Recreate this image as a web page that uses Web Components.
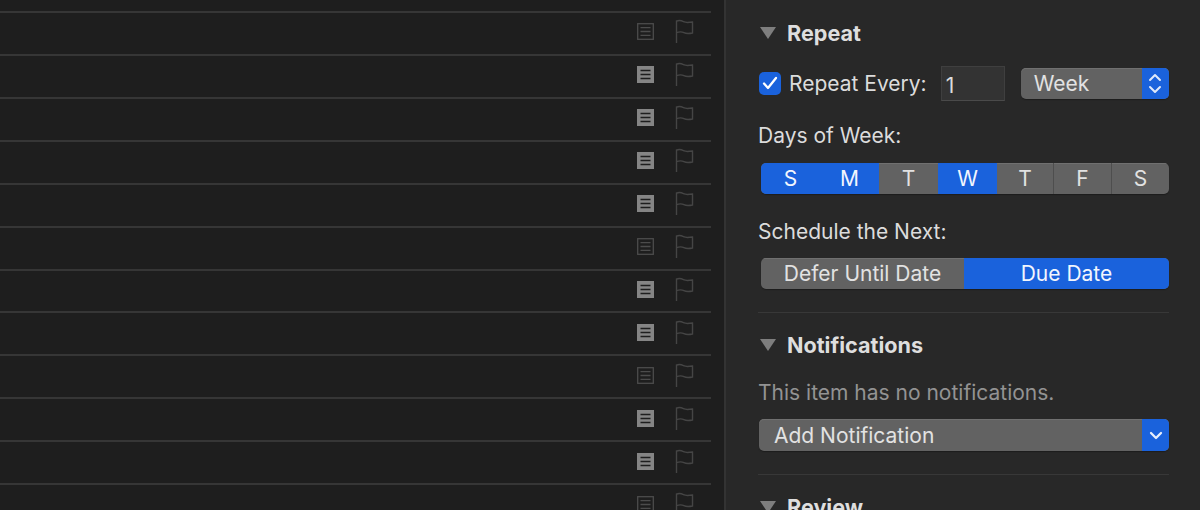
<!DOCTYPE html>
<html>
<head>
<meta charset="utf-8">
<style>
html, body { margin: 0; height: 510px; overflow: hidden; background: #1e1e1e; }
body { font-family: Inter, "Liberation Sans", sans-serif; }
</style>
</head>
<body>
<app-window>
  <task-list slot="list"></task-list>
  <task-inspector slot="side">
    <inspector-section title="Repeat">
      <repeat-line></repeat-line>
      <field-label style="margin-top:22px">Days of Week:</field-label>
      <seg-control style="margin-top:14px" columns="59px 59px 59px 59px 57px 58px 57px" items="S,M,T,W,T,F,S" on="0,1,3"></seg-control>
      <field-label style="margin-top:25px">Schedule the Next:</field-label>
      <seg-control style="margin-top:13px" columns="203px 205px" items="Defer Until Date,Due Date" on="1"></seg-control>
    </inspector-section>
    <inspector-section title="Notifications" divider>
      <field-label style="margin-top:22px;color:#939393">This item has no notifications.</field-label>
      <popup-button style="margin-top:13px;margin-left:1px;height:32px" label="Add Notification" kind="down"></popup-button>
    </inspector-section>
    <inspector-section title="Review" divider></inspector-section>
  </task-inspector>
</app-window>

<script>
// Outer split: dark list on the left, inspector on the right
class AppWindow extends HTMLElement {
  constructor() {
    super();
    this.attachShadow({ mode: 'open' });
    this.shadowRoot.innerHTML = `
      <style>
        :host { display: grid; grid-template-columns: 724px 2px 1fr; width: 1200px; height: 510px; overflow: hidden; }
        .rule { background: #333; }
      </style>
      <slot name="list"></slot>
      <div class="rule"></div>
      <slot name="side"></slot>`;
  }
}

class TaskList extends HTMLElement {
  constructor() {
    super();
    this.attachShadow({ mode: 'open' });
    // o = outline note icon, f = filled note icon
    const notes = ['o', 'f', 'f', 'f', 'f', 'o', 'f', 'f', 'o', 'f', 'f', 'o'];
    this.shadowRoot.innerHTML = `
      <style>
        :host { display: block; background: #1e1e1e; overflow: hidden; height: 510px; padding-right: 13px; }
        .top { height: 11px; }
      </style>
      <div class="top"></div>
      ${notes.map(n => `<task-row note="${n}"></task-row>`).join('')}`;
  }
}

class TaskRow extends HTMLElement {
  constructor() {
    super();
    this.attachShadow({ mode: 'open' });
    const filled = this.getAttribute('note') === 'f';
    const note = filled
      ? `<svg class="note" width="17" height="17" viewBox="0 0 17 17"><rect width="17" height="17" fill="#858585"/><path d="M3.500 4.500h10M3.500 8.500h10M3.500 12.500h10" stroke="#1e1e1e" stroke-width="1.600"/></svg>`
      : `<svg class="note" width="17" height="17" viewBox="0 0 17 17" fill="none" stroke="#4c4c4c" stroke-width="1.300"><rect x=".7" y=".7" width="15.600" height="15.600"/><path d="M3.500 4.700h10M3.500 8.500h10M3.500 12.300h10"/></svg>`;
    this.shadowRoot.innerHTML = `
      <style>
        :host { display: flex; align-items: center; justify-content: flex-end; gap: 21px; height: 42.93px; box-sizing: border-box; border-top: 2px solid #363636; padding-right: 16px; }
        svg { display: block; margin-top: -3px; }
      </style>
      ${note}
      <svg class="flag" width="20" height="25" viewBox="0 0 20 25" fill="none" stroke="#454545" stroke-width="1.400"><path d="M1.500 24V1.500"/><path d="M1.500 2.200c3-1.400 5-.6 7 .5s4.500 1 9 .3v11c-4 .8-6.500.7-8.500-.3s-4.500-1.200-7.500 0"/></svg>`;
  }
}

class TaskInspector extends HTMLElement {
  constructor() {
    super();
    this.attachShadow({ mode: 'open' });
    this.shadowRoot.innerHTML = `
      <style>
        :host { display: block; height: 510px; overflow: hidden; background: #282828; box-sizing: border-box; padding: 20px 31px 0 32px; color: #dcdcdc; font: 21px Inter, "Liberation Sans", sans-serif; }
      </style>
      <slot></slot>`;
  }
}

class InspectorSection extends HTMLElement {
  constructor() {
    super();
    this.attachShadow({ mode: 'open' });
    this.shadowRoot.innerHTML = `
      <style>
        :host { display: block; }
        :host([divider]) { border-top: 1px solid #383838; margin-top: 23px; padding-top: 19px; }
        .head { display: flex; align-items: center; gap: 11px; height: 26px; font-weight: 700; font-size: 21.6px; color: #dedede; }
        .tri { width: 0; height: 0; margin-left: 2px; border-left: 8px solid transparent; border-right: 8px solid transparent; border-top: 12px solid #7e7e7e; }
      </style>
      <div class="head"><span class="tri"></span><span>${this.getAttribute('title')}</span></div>
      <slot></slot>`;
  }
}

class FieldLabel extends HTMLElement {
  constructor() {
    super();
    this.attachShadow({ mode: 'open' });
    this.shadowRoot.innerHTML = `
      <style>:host { display: block; height: 26px; line-height: 26px; white-space: nowrap; }</style>
      <slot></slot>`;
  }
}

class RepeatLine extends HTMLElement {
  constructor() {
    super();
    this.attachShadow({ mode: 'open' });
    this.shadowRoot.innerHTML = `
      <style>
        :host { display: flex; align-items: center; height: 36px; margin-top: 19px; white-space: nowrap; }
        .check { width: 22px; height: 23px; border-radius: 5px; background: #1a62dc; display: flex; align-items: center; justify-content: center; margin: 0 8px 0 1px; flex: none; }
        .num { width: 64px; height: 35px; box-sizing: border-box; margin-left: 14px; background: #333; border: 1px solid #3f3f3f; border-bottom-color: #4a4a4a; padding: 5px 0 0 4px; line-height: 28px; flex: none; }
        popup-button { width: 148px; height: 31px; margin-left: 16px; flex: none; }
      </style>
      <span class="check"><svg width="16" height="14" viewBox="0 0 16 14" fill="none" stroke="#fff" stroke-width="2.300" stroke-linecap="round" stroke-linejoin="round"><path d="M2 7.500l4 4.500 8-10"/></svg></span>
      <span>Repeat Every:</span>
      <span class="num">1</span>
      <popup-button label="Week" kind="updown"></popup-button>`;
  }
}

class PopupButton extends HTMLElement {
  constructor() {
    super();
    this.attachShadow({ mode: 'open' });
    const updown = this.getAttribute('kind') === 'updown';
    const glyph = updown
      ? `<svg width="14" height="23" viewBox="0 0 14 23" fill="none" stroke="#dfe9fb" stroke-width="2" stroke-linecap="round" stroke-linejoin="round"><path d="M2 8l5-5 5 5M2 15l5 5 5-5"/></svg>`
      : `<svg width="14" height="9" viewBox="0 0 14 9" fill="none" stroke="#e6eefc" stroke-width="2.300" stroke-linecap="round" stroke-linejoin="round"><path d="M2 2l5 5 5-5"/></svg>`;
    this.shadowRoot.innerHTML = `
      <style>
        :host { display: flex; box-sizing: border-box; border-radius: 5px; overflow: hidden; background: #626262; box-shadow: inset 0 1px 0 #707070, 0 1px 1px #1c1c1c; color: #e2e2e2; }
        .label { flex: 1; display: flex; align-items: center; padding: 1px 0 0 ${updown ? 13 : 15}px; }
        .arrow { width: 27px; background: #1a62dc; display: flex; align-items: center; justify-content: center; }
      </style>
      <div class="label">${this.getAttribute('label')}</div>
      <div class="arrow">${glyph}</div>`;
  }
}

// Segmented control, items and selected indexes come from attributes
class SegControl extends HTMLElement {
  constructor() {
    super();
    this.attachShadow({ mode: 'open' });
    const items = this.getAttribute('items').split(',');
    const on = this.getAttribute('on').split(',').map(Number);
    const cells = items.map((t, i) => {
      const sel = on.includes(i);
      const nextSel = on.includes(i + 1);
      const line = !sel && !nextSel && i < items.length - 1;
      return `<div class="cell ${sel ? 'on' : ''} ${line ? 'line' : ''}">${t}</div>`;
    }).join('');
    this.shadowRoot.innerHTML = `
      <style>
        :host { display: grid; grid-template-columns: ${this.getAttribute('columns')}; height: 31px; margin-left: 3px; border-radius: 5px; overflow: hidden; background: #626262; box-shadow: 0 1px 1px #1c1c1c; color: #e2e2e2; }
        .cell { display: flex; align-items: center; justify-content: center; box-shadow: inset 0 1px 0 #707070; }
        .on { background: #1a62dc; color: #f2f6fe; box-shadow: none; }
        .line { border-right: 1px solid #4e4e4e; }
      </style>
      ${cells}`;
  }
}

customElements.define('app-window', AppWindow);
customElements.define('task-list', TaskList);
customElements.define('task-row', TaskRow);
customElements.define('task-inspector', TaskInspector);
customElements.define('inspector-section', InspectorSection);
customElements.define('field-label', FieldLabel);
customElements.define('repeat-line', RepeatLine);
customElements.define('popup-button', PopupButton);
customElements.define('seg-control', SegControl);
</script>
</body>
</html>
